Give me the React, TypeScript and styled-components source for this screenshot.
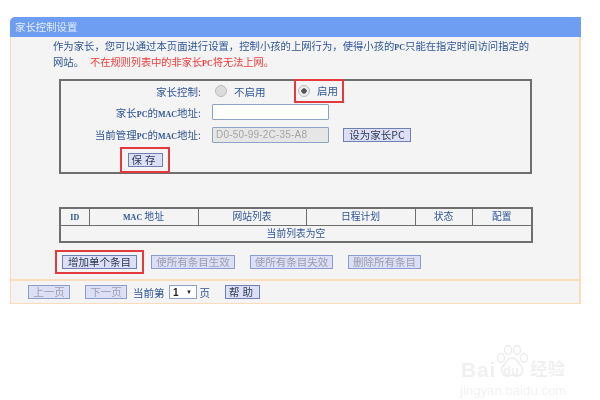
import React from "react";
import styled, { createGlobalStyle } from "styled-components";

const GlobalStyle = createGlobalStyle`
  html, body {
    margin: 0;
    padding: 0;
    background: #fff;
  }
  body {
    font-family: "Noto Sans CJK SC", "Liberation Sans", sans-serif;
    font-size: 10.5px;
    color: #2f5596;
  }
`;

const Page = styled.div`
  width: 600px;
  height: 400px;
  padding: 17px 0 0 10px;
  box-sizing: border-box;
  position: relative;
  overflow: hidden;
`;

const Panel = styled.div`
  width: 571px;
  height: 287px;
  box-sizing: border-box;
  background: #f4f4f4;
  border: solid #f8dcbc;
  border-width: 0 2px 1px 1px;
  border-radius: 5px 0 0 0;
  display: flex;
  flex-direction: column;
  filter: blur(0.45px);
`;

const Title = styled.div`
  height: 20px;
  margin: 0 -2px 0 -1px;
  padding-left: 5px;
  background: #6d9ef2;
  border-radius: 5px 0 0 0;
  color: #e4edfb;
  font-size: 10.4px;
  line-height: 20px;
`;

const Body = styled.div`
  flex: 1;
  padding: 0 0 0 42px;
`;

const Intro = styled.div`
  margin: 1px 0 0;
  height: 32px;
  font-size: 10.35px;
  line-height: 16px;
  color: #2f5596;
  white-space: nowrap;
`;

const Warn = styled.span`
  color: #f03a3a;
  font-size: 10.2px;
  margin-left: 6px;
`;

const Latin = styled.span`
  font-family: "Liberation Serif", serif;
  font-size: 8px;
  font-weight: 700;
  line-height: 0;
`;

const FormBox = styled.div`
  width: 473px;
  height: 95px;
  margin: 9px 0 0 6px;
  box-sizing: border-box;
  border: 2px solid #6e6e6e;
  position: relative;
`;

const FormRow = styled.div`
  display: flex;
  align-items: center;
  height: 22.5px;
`;

const FirstRow = styled(FormRow)`
  height: 20px;
`;

const Label = styled.span`
  width: 140px;
  text-align: right;
  margin-right: 11px;
  color: #2f5596;
  white-space: nowrap;
`;

const Radio = styled.span<{ $on?: boolean }>`
  width: 10px;
  height: 10px;
  border-radius: 50%;
  border: 1px solid #bbb;
  background: ${(p) =>
    p.$on ? "radial-gradient(circle, #555 0 2.4px, #eee 3px)" : "#dcdcdc"};
  margin-right: 7px;
`;

const RadioOff = styled.label`
  display: flex;
  align-items: center;
  margin-left: 3px;
  width: 79px;
`;

const RedBox = styled.div`
  border: 2px solid #e23a3f;
  box-sizing: border-box;
  display: flex;
  align-items: center;
  justify-content: center;
`;

const RadioHighlight = styled(RedBox)`
  width: 50px;
  height: 24px;
  margin-top: -1px;
  justify-content: flex-start;
  padding-left: 2px;
`;

const TextField = styled.div<{ $disabled?: boolean }>`
  width: 112px;
  height: 14px;
  border: 1px solid #8da2c4;
  border-radius: 1px;
  background: ${(p) => (p.$disabled ? "#e6e6e6" : "#fff")};
  color: #a5a5a5;
  font-family: "Liberation Sans", sans-serif;
  font-size: 10px;
  line-height: 14px;
  padding-left: 3px;
  margin-right: 14px;
  letter-spacing: 0.2px;
  white-space: nowrap;
`;

const Button = styled.button<{ $w: number; $muted?: boolean; $spaced?: boolean }>`
  width: ${(p) => p.$w}px;
  height: 14px;
  padding: 0;
  border: 1px solid ${(p) => (p.$muted ? "#8b9bcb" : "#6d7fb5")};
  background: #dcdff5;
  color: ${(p) => (p.$muted ? "#9a9fb2" : "#2d3a55")};
  font-family: inherit;
  font-size: 10.5px;
  line-height: 12px;
  letter-spacing: ${(p) => (p.$spaced ? "3px" : "0")};
  white-space: nowrap;
`;

const SaveHighlight = styled(RedBox)`
  width: 50px;
  height: 26px;
  position: absolute;
  left: 59px;
  top: 66px;
`;

const DataTable = styled.table`
  width: 472px;
  height: 35px;
  margin: 33px 0 0 6px;
  border-collapse: collapse;
  border: 2px solid #6e6e6e;
  table-layout: fixed;
  font-size: 9.8px;
  color: #2f5596;
  td {
    border: 1px solid #6e6e6e;
    text-align: center;
    padding: 0;
    height: 15.5px;
    line-height: 13px;
  }
`;

const Actions = styled.div`
  display: flex;
  align-items: center;
  margin: 7px 0 0 2px;
  height: 24px;
`;

const AddHighlight = styled(RedBox)`
  width: 89px;
  height: 24px;
  margin-right: 7px;
`;

const ActionGap = styled.div`
  width: 15px;
`;

const Footer = styled.div`
  height: 22px;
  border-top: 2px solid #f8dcbc;
  padding-left: 17px;
  display: flex;
  align-items: center;
  color: #2f5596;
`;

const FooterGap = styled.span<{ $w: number }>`
  display: inline-block;
  width: ${(p) => p.$w}px;
`;

const PageSelect = styled.div`
  width: 28px;
  height: 14px;
  margin: 0 3px 0 4px;
  box-sizing: border-box;
  border: 1px solid #8da2c4;
  background: #fff;
  color: #222;
  display: flex;
  align-items: center;
  justify-content: space-around;
  font-family: "Liberation Sans", sans-serif;
  font-weight: 700;
  font-size: 10px;
`;

const Caret = styled.span`
  font-size: 6px;
`;

const Watermark = styled.div`
  position: absolute;
  left: 460px;
  top: 345px;
  width: 130px;
  height: 54px;
  color: #f0f0f0;
  filter: blur(0.5px);
`;

const BaiText = styled.span`
  position: absolute;
  left: 1px;
  top: 13px;
  font-family: "Liberation Sans", sans-serif;
  font-size: 21px;
  font-weight: 700;
  letter-spacing: 0.8px;
`;

const JingText = styled.span`
  position: absolute;
  left: 0;
  top: 38px;
  font-family: "Liberation Sans", sans-serif;
  font-size: 13.2px;
  color: #f2f2f2;
`;

const CnText = styled.span`
  position: absolute;
  left: 70px;
  top: 12px;
  font-size: 17.5px;
  line-height: 22px;
  font-weight: 700;
`;

const Paw = styled.svg`
  position: absolute;
  left: 35px;
  top: 0;
`;

const DuText = styled.span`
  position: absolute;
  left: 43px;
  top: 18px;
  font-family: "Liberation Sans", sans-serif;
  font-size: 13px;
  font-weight: 700;
`;

const columns = [
  [<Latin key="id">ID</Latin>, 29],
  [<React.Fragment key="mac"><Latin>MAC</Latin> 地址</React.Fragment>, 109],
  ["网站列表", 108],
  ["日程计划", 109],
  ["状态", 57],
  ["配置", 60],
] as const;

export default function App() {
  return (
    <>
      <GlobalStyle />
      <Page>
        <Panel>
          <Title>家长控制设置</Title>
          <Body>
            <Intro>
              作为家长，您可以通过本页面进行设置，控制小孩的上网行为，使得小孩的<Latin>PC</Latin>只能在指定时间访问指定的
              <br />
              网站。
              <Warn>不在规则列表中的非家长<Latin>PC</Latin>将无法上网。</Warn>
            </Intro>
            <FormBox>
              <FirstRow>
                <Label>家长控制:</Label>
                <RadioOff>
                  <Radio />
                  不启用
                </RadioOff>
                <RadioHighlight>
                  <Radio $on />
                  启用
                </RadioHighlight>
              </FirstRow>
              <FormRow>
                <Label>家长<Latin>PC</Latin>的<Latin>MAC</Latin>地址:</Label>
                <TextField />
              </FormRow>
              <FormRow>
                <Label>当前管理<Latin>PC</Latin>的<Latin>MAC</Latin>地址:</Label>
                <TextField $disabled>D0-50-99-2C-35-A8</TextField>
                <Button $w={68}>设为家长PC</Button>
              </FormRow>
              <SaveHighlight>
                <Button $w={35} $spaced>
                  保存
                </Button>
              </SaveHighlight>
            </FormBox>
            <DataTable>
              <colgroup>
                {columns.map(([, w], i) => (
                  <col key={i} width={w} />
                ))}
              </colgroup>
              <tbody>
                <tr>
                  {columns.map(([name], i) => (
                    <td key={i}>{name}</td>
                  ))}
                </tr>
                <tr>
                  <td colSpan={6}>当前列表为空</td>
                </tr>
              </tbody>
            </DataTable>
            <Actions>
              <AddHighlight>
                <Button $w={75}>增加单个条目</Button>
              </AddHighlight>
              <Button $w={84} $muted>
                使所有条目生效
              </Button>
              <ActionGap />
              <Button $w={83} $muted>
                使所有条目失效
              </Button>
              <ActionGap />
              <Button $w={73} $muted>
                删除所有条目
              </Button>
            </Actions>
          </Body>
          <Footer>
            <Button $w={42} $muted>
              上一页
            </Button>
            <FooterGap $w={15} />
            <Button $w={42} $muted>
              下一页
            </Button>
            <FooterGap $w={6} />
            当前第
            <PageSelect>
              1<Caret>▼</Caret>
            </PageSelect>
            页
            <FooterGap $w={15} />
            <Button $w={35} $spaced>
              帮助
            </Button>
          </Footer>
        </Panel>
        <Watermark>
          <BaiText>Bai</BaiText>
          <Paw width="34" height="36" viewBox="0 0 34 36" fill="none" stroke="#ececec" strokeWidth="1.4">
            <ellipse cx="6" cy="13" rx="3.5" ry="4.5" />
            <ellipse cx="13" cy="5" rx="3.5" ry="4.5" />
            <ellipse cx="22" cy="5" rx="3.5" ry="4.5" />
            <ellipse cx="29" cy="13" rx="3.5" ry="4.5" />
            <path d="M17 13c-5 0-6 5-9 8-3 4-1 10 4 10 2 0 3-1 5-1s3 1 5 1c5 0 7-6 4-10-3-3-4-8-9-8z" />
          </Paw>
          <DuText>du</DuText>
          <CnText>经验</CnText>
          <JingText>jingyan.baidu.com</JingText>
        </Watermark>
      </Page>
    </>
  );
}
